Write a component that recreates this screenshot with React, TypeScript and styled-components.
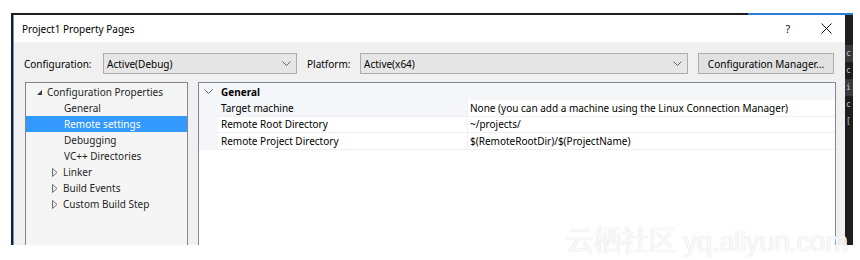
import React from "react";
import styled, { createGlobalStyle } from "styled-components";

const Global = createGlobalStyle`
  html, body { margin: 0; padding: 0; background: #ffffff; }
  body { font-family: "Noto Sans", "Open Sans", sans-serif; font-size: 10px; color: #000; }
  * { box-sizing: border-box; }
`;

const Page = styled.div`
  position: relative;
  width: 860px;
  height: 260px;
  overflow: hidden;
  background: #ffffff;
`;

const Frame = styled.div`
  margin: 13px 0 0 11px;
  width: 842px;
  height: 232px;
  display: flex;
  background: #1e1e1e;
  border-top: 2px solid #1e1e1e;
  border-left: 2px solid #1e1e1e;
  position: relative;
`;

const Accent = styled.div`
  position: absolute;
  top: -2px;
  left: 735px;
  right: 0;
  height: 2px;
  background: #2b7fd4;
`;

const Dialog = styled.div`
  flex: 1;
  display: flex;
  flex-direction: column;
  background: #f0f0f0;
  border-left: 1px solid #5b9bd8;
  overflow: hidden;
`;

const TitleBar = styled.div`
  height: 27px;
  flex: none;
  background: #ffffff;
  display: flex;
  align-items: center;
  padding-left: 8px;
`;

const Title = styled.div`
  flex: 1;
  font-size: 10px;
  color: #000;
`;

const TitleButton = styled.div`
  width: 38px;
  height: 27px;
  display: flex;
  align-items: center;
  justify-content: center;
  font-size: 11px;
  color: #111;
`;

const Body = styled.div`
  flex: 1;
  display: flex;
  flex-direction: column;
  padding: 11px 9px 0 10px;
  min-height: 0;
`;

const Toolbar = styled.div`
  display: flex;
  align-items: center;
  height: 21px;
`;

const Label = styled.div<{ $w: number; $pad?: number }>`
  width: ${(p) => p.$w}px;
  padding-left: ${(p) => p.$pad ?? 0}px;
  flex: none;
  white-space: nowrap;
`;

const Combo = styled.div<{ $w: number }>`
  width: ${(p) => p.$w}px;
  height: 21px;
  flex: none;
  display: flex;
  align-items: center;
  justify-content: space-between;
  padding: 0 5px 0 3px;
  background: #e6e6e6;
  border: 1px solid #acacac;
`;

const Button = styled.div`
  margin-left: 10px;
  width: 136px;
  height: 21px;
  flex: none;
  display: flex;
  align-items: center;
  justify-content: center;
  background: #e1e1e1;
  border: 1px solid #adadad;
`;

const Main = styled.div`
  margin-top: 8px;
  flex: 1;
  display: flex;
  gap: 10px;
  padding-left: 1px;
  min-height: 0;
`;

const Tree = styled.div`
  width: 163px;
  flex: none;
  background: #f5f5f5;
  border: 1px solid #82878f;
  border-bottom: none;
  padding-top: 1px;
`;

const TreeRow = styled.div<{ $indent: number; $selected?: boolean }>`
  height: 16px;
  display: flex;
  align-items: center;
  padding-left: ${(p) => p.$indent}px;
  background: ${(p) => (p.$selected ? "#3399ff" : "transparent")};
  color: ${(p) => (p.$selected ? "#ffffff" : "#1e1e1e")};
  white-space: nowrap;
`;

const Expander = styled.span<{ $shift?: number }>`
  width: 11px;
  margin-left: ${(p) => p.$shift ?? 0}px;
  flex: none;
  display: flex;
  align-items: center;
`;

const Grid = styled.div`
  flex: 1;
  background: #ffffff;
  border: 1px solid #82878f;
  border-bottom: none;
`;

const CategoryRow = styled.div`
  height: 17px;
  display: flex;
  align-items: center;
  background: #f4f6f9;
  font-weight: 700;
`;

const CategoryText = styled.span`
  padding-left: 3px;
`;

const Gutter = styled.div`
  width: 19px;
  flex: none;
  align-self: stretch;
  display: flex;
  align-items: center;
  justify-content: center;
  background: #f4f6f9;
`;

const PropRow = styled.div`
  height: 16.67px;
  display: flex;
  align-items: stretch;
`;

const NameCell = styled.div<{ $selected?: boolean }>`
  width: 249px;
  flex: none;
  display: flex;
  align-items: center;
  padding-left: 3px;
  background: ${(p) => (p.$selected ? "#f4f6f9" : "#ffffff")};
  border-bottom: 1px solid #f0f0f0;
  white-space: nowrap;
`;

const ValueCell = styled.div`
  flex: 1;
  display: flex;
  align-items: center;
  padding-left: 2px;
  border-left: 1px solid #f0f0f0;
  border-bottom: 1px solid #f0f0f0;
  white-space: nowrap;
`;

const SideStrip = styled.div`
  width: 8px;
  flex: none;
  background: #1e1e1e;
  overflow: hidden;
  color: #c8c8c8;
  font-family: "DejaVu Sans Mono", monospace;
  font-size: 8px;
  padding-top: 30px;
`;

const StripLine = styled.div<{ $band?: boolean }>`
  height: 17px;
  line-height: 17px;
  white-space: nowrap;
  padding-left: 1px;
  background: ${(p) => (p.$band ? "#3a3a3e" : "transparent")};
`;

const Watermark = styled.div`
  position: absolute;
  left: 566px;
  top: 219px;
  font-family: "Liberation Sans", "Noto Sans CJK SC", sans-serif;
  font-size: 28px;
  letter-spacing: -0.5px;
  color: rgba(255, 255, 255, 0.9);
  text-shadow: 0 0 1px rgba(140, 140, 140, 0.45);
  white-space: nowrap;
  pointer-events: none;
`;

const Chevron = () => (
  <svg width="9" height="6" viewBox="0 0 9 6">
    <path d="M0.5 0.5 L4.5 4.5 L8.5 0.5" fill="none" stroke="#606060" strokeWidth="1" />
  </svg>
);

const Expanded = () => (
  <svg width="7" height="7" viewBox="0 0 7 7">
    <path d="M6 1 L6 6 L1 6 Z" fill="#404040" />
  </svg>
);

const Collapsed = () => (
  <svg width="6" height="9" viewBox="0 0 6 9">
    <path d="M0.5 0.5 L5 4.5 L0.5 8.5 Z" fill="none" stroke="#707070" strokeWidth="1" />
  </svg>
);

const CloseIcon = () => (
  <svg width="11" height="11" viewBox="0 0 11 11">
    <path d="M0.5 0.5 L10.5 10.5 M10.5 0.5 L0.5 10.5" stroke="#111" strokeWidth="1" />
  </svg>
);

type TreeItem = { text: string; level: 0 | 1; kind: "open" | "closed" | "leaf"; selected?: boolean };

const treeItems: TreeItem[] = [
  { text: "Configuration Properties", level: 0, kind: "open" },
  { text: "General", level: 1, kind: "leaf" },
  { text: "Remote settings", level: 1, kind: "leaf", selected: true },
  { text: "Debugging", level: 1, kind: "leaf" },
  { text: "VC++ Directories", level: 1, kind: "leaf" },
  { text: "Linker", level: 1, kind: "closed" },
  { text: "Build Events", level: 1, kind: "closed" },
  { text: "Custom Build Step", level: 1, kind: "closed" },
];

const props = [
  { name: "Target machine", value: "None (you can add a machine using the Linux Connection Manager)", selected: true },
  { name: "Remote Root Directory", value: "~/projects/" },
  { name: "Remote Project Directory", value: "$(RemoteRootDir)/$(ProjectName)" },
];

export default function App() {
  return (
    <Page>
      <Global />
      <Frame>
        <Accent />
        <Dialog>
          <TitleBar>
            <Title>Project1 Property Pages</Title>
            <TitleButton>?</TitleButton>
            <TitleButton>
              <CloseIcon />
            </TitleButton>
          </TitleBar>
          <Body>
            <Toolbar>
              <Label $w={79}>Configuration:</Label>
              <Combo $w={194}>
                <span>Active(Debug)</span>
                <Chevron />
              </Combo>
              <Label $w={63} $pad={10}>Platform:</Label>
              <Combo $w={328}>
                <span>Active(x64)</span>
                <Chevron />
              </Combo>
              <Button>Configuration Manager...</Button>
            </Toolbar>
            <Main>
              <Tree>
                {treeItems.map((t) => (
                  <TreeRow key={t.text} $indent={t.level === 0 ? 10 : 38} $selected={t.selected}>
                    {t.level === 0 ? (
                      <Expander>
                        <Expanded />
                      </Expander>
                    ) : t.kind === "closed" ? (
                      <Expander $shift={-12}>
                        <Collapsed />
                      </Expander>
                    ) : null}
                    <span>{t.text}</span>
                  </TreeRow>
                ))}
              </Tree>
              <Grid>
                <CategoryRow>
                  <Gutter>
                    <Chevron />
                  </Gutter>
                  <CategoryText>General</CategoryText>
                </CategoryRow>
                {props.map((p) => (
                  <PropRow key={p.name}>
                    <Gutter />
                    <NameCell $selected={p.selected}>{p.name}</NameCell>
                    <ValueCell>{p.value}</ValueCell>
                  </PropRow>
                ))}
              </Grid>
            </Main>
          </Body>
        </Dialog>
        <SideStrip>
          <StripLine $band>c</StripLine>
          <StripLine>c</StripLine>
          <StripLine $band>i</StripLine>
          <StripLine>c</StripLine>
          <StripLine>[</StripLine>
        </SideStrip>
      </Frame>
      <Watermark>云栖社区 yq.aliyun.com</Watermark>
    </Page>
  );
}
